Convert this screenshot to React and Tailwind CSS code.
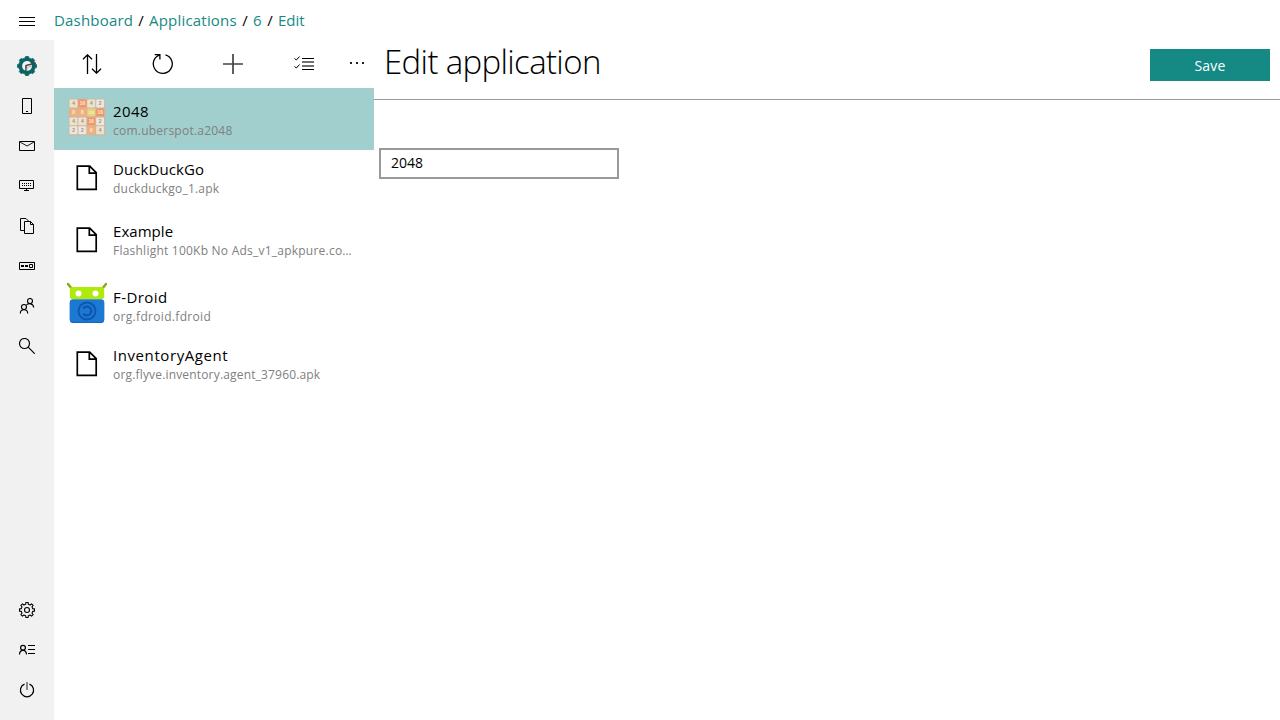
import React from 'react';

const S = ({ size = 16, w = 1, children, className = '' }) => (
  <svg width={size} height={size} viewBox={`0 0 ${size} ${size}`} fill="none" stroke="#000" strokeWidth={w} className={`block shrink-0 ${className}`}>
    {children}
  </svg>
);

const gearPath = (cx, cy, ro, ri, n) => {
  const pts = [];
  for (let i = 0; i < n; i++) {
    const step = (Math.PI * 2) / n;
    const a = i * step - Math.PI / 2;
    [[-0.29, ri], [-0.19, ro], [0.19, ro], [0.29, ri]].forEach(([o, r]) => {
      pts.push(`${(cx + r * Math.cos(a + o * step)).toFixed(2)} ${(cy + r * Math.sin(a + o * step)).toFixed(2)}`);
    });
  }
  return `M${pts.join('L')}Z`;
};

const Logo = () => (
  <svg width="20" height="20" viewBox="0 0 20 20" className="block">
    <path d={gearPath(10, 10, 9.6, 8.3, 8)} fill="#0a6464" stroke="#0a6464" strokeWidth="0.8" strokeLinejoin="round" />
    <circle cx="10" cy="10" r="4.9" fill="#f2f2f2" />
    <path d="M9 15.5V9.6L18.8 7" fill="none" stroke="#444" strokeWidth="1.6" />
    <path d="M10 15v-3.2l4-1.6" fill="none" stroke="#aaa" strokeWidth="0.9" />
  </svg>
);

const Menu = () => <S><path d="M0 3.5h16M0 7.5h16M0 11.5h16" /></S>;
const Phone = () => <S><path d="M3.5.5h9v15h-9zM7 13.5h2" /></S>;
const Mail = () => <S><path d="M.5 3.5h15v9H.5z" /><path d="M1 4l7 4 7-4" strokeWidth="0.9" /></S>;
const Device = () => (
  <S>
    <path d="M.5 2.5h14v8H.5zM7.5 11v2M5 12.5h5" />
    <path d="M3 5.5h10M3 7.5h10" strokeDasharray="1 1" />
  </S>
);
const Files = () => (
  <S>
    <path d="M5 12.5H1.5v-12H7l2.5 2.5" />
    <path d="M5.500 3.500h6l3 3v9h-9zM11.500 3.500v3h3" />
  </S>
);
const Fleet = () => <S><path d="M.5 4.500h15v7H.5zM10.500 6.500h3v3h-3z" /><path d="M2 8h3M6 8h3" strokeWidth="2" /></S>;
const Users = () => (
  <S w={1.15}>
    <circle cx="11" cy="3" r="2.500" />
    <circle cx="5" cy="9" r="2.500" />
    <path d="M1.300 15.500c0-5 7.400-5 7.400 0M7.500 7c1.500-2 7-2 7.200 2.500" />
  </S>
);
const Search = () => <S w={1.15}><circle cx="5.500" cy="5.500" r="5" /><path d="M9.200 9.200l6.500 6.500" /></S>;
const Gear = () => <S w={1.1}><path d={gearPath(8, 8, 7.6, 5.9, 8)} strokeLinejoin="round" /><circle cx="8" cy="8" r="2.500" /></S>;
const Contact = () => (
  <S>
    <circle cx="4" cy="5.700" r="2.400" strokeWidth="1.200" />
    <path d="M.5 12.500c.2-5.600 6.800-5.600 7 0" strokeWidth="1.200" />
    <path d="M9 3.500h7M9 7.500h7M9 11.500h7" />
  </S>
);
const Power = () => <S w={1.2}><path d="M5.500 2.100a6.600 6.600 0 1 0 5 0" /><path d="M8 0v8" stroke="#666" strokeWidth="1.500" /></S>;

const Sort = () => (
  <S size={20} w={1.3}>
    <path d="M5.500 20V.8M1 5.200L5.500.8 10 5.200M14.500 0v19.200M10 14.800l4.500 4.400 4.500-4.400" />
  </S>
);
const Refresh = () => (
  <S size={22} w={1.300}>
    <path d="M13.500 1.800a9.500 9.500 0 1 1-6.300.300M2.700 1.600h5.200v5" />
  </S>
);
const Plus = () => <S size={20} w={2}><path d="M10 0v20M0 10h20" stroke="#444" strokeWidth="1.700" /></S>;
const Checks = () => (
  <S size={20}>
    <path d="M8 4.500h12M8 15.500h12" />
    <path d="M8 8h12M8 12h12" stroke="#444" strokeWidth="1.700" />
    <path d="M.5 4.500L2.300 6 5.600 2.500M.5 12.500L2.300 14l3.300-3.500" />
  </S>
);
const Dots = () => (
  <svg width="14" height="4" viewBox="0 0 14 4" fill="#222" className="block"><path d="M0 1h2v2H0zM6 1h2v2H6zM12 1h2v2h-2z" /></svg>
);
const FileIcon = () => <S size={26} w={1.700}><path d="M3.300 1.200h12.400l6.500 6.500v16.600H3.300zM15.300 1.200v6.900h6.900" /></S>;

const tiles = [
  ['4', '#efe2cb'], ['16', '#f69664'], ['4', '#efe2cb'], ['2', '#eee6dc'],
  ['8', '#f4b07a'], ['8', '#f4b07a'], ['128', '#edd472'], ['16', '#f69664'],
  ['4', '#efe2cb'], ['4', '#efe2cb'], ['16', '#f69664'], ['2', '#eee6dc'],
  ['2', '#eee6dc'], ['2', '#eee6dc'], ['8', '#f4b07a'], ['4', '#efe2cb'],
];
const Icon2048 = () => (
  <svg width="40" height="40" viewBox="0 0 40 40" className="block shrink-0">
    <rect x="1.700" y="1.700" width="36.600" height="36.800" rx="1.500" fill="#c9b8a6" />
    {tiles.map(([n, c], i) => {
      const x = 2.500 + (i % 4) * 8.900;
      const y = 2.500 + Math.floor(i / 4) * 8.950;
      return (
        <g key={i}>
          <rect x={x} y={y} width="7.900" height="7.900" rx="0.600" fill={c} />
          <text x={x + 4} y={y + 5.700} textAnchor="middle" fontSize={n.length > 2 ? 3.500 : 4.800} fontWeight="700" className="font-['Liberation_Sans',sans-serif]" fill={n === '2' || n === '4' ? '#9a8f82' : '#fbeadd'}>{n}</text>
        </g>
      );
    })}
  </svg>
);
const FDroid = () => (
  <svg width="40" height="42" viewBox="0 0 40 42" className="block shrink-0">
    <path d="M1 2l4 5M39 2l-4 5" stroke="#8aa51c" strokeWidth="2.400" strokeLinecap="round" />
    <rect x="2.800" y="5" width="34.400" height="12" rx="2.500" fill="#aeea0c" />
    <circle cx="11.500" cy="11.500" r="3" fill="#fff" />
    <circle cx="28.500" cy="11.500" r="3" fill="#fff" />
    <rect x="2.800" y="17.500" width="34.400" height="23.500" rx="3" fill="#1565c0" />
    <rect x="2.800" y="17.500" width="34.400" height="22.500" rx="3" fill="#1d78d4" />
    <circle cx="20" cy="29" r="8.500" fill="none" stroke="#0d55ad" strokeWidth="1.800" />
    <path d="M16.300 26.500a4.400 4.400 0 1 1 0 5" fill="none" stroke="#0d55ad" strokeWidth="2.200" />
  </svg>
);

const apps = [
  { name: '2048', sub: 'com.uberspot.a2048', icon: <Icon2048 />, nt: 'tracking-[0.45px]', st: 'tracking-[0.23px]' },
  { name: 'DuckDuckGo', sub: 'duckduckgo_1.apk', nt: 'tracking-[0.1px]', st: 'tracking-[0.22px]' },
  { name: 'Example', sub: 'Flashlight 100Kb No Ads_v1_apkpure.co…', nt: 'tracking-[0.05px]', st: 'tracking-[0.23px]' },
  { name: 'F-Droid', sub: 'org.fdroid.fdroid', icon: <FDroid />, nt: 'tracking-[0.42px]', st: 'tracking-[0.32px]' },
  { name: 'InventoryAgent', sub: 'org.flyve.inventory.agent_37960.apk', nt: 'tracking-[0.58px]', st: 'tracking-[0.17px]' },
];

const NavItem = ({ children }) => <a className="flex h-10 items-center justify-center">{children}</a>;

export default function App() {
  return (
    <div className="flex h-[720px] w-[1280px] flex-col overflow-hidden bg-white font-['Open_Sans','Noto_Sans',sans-serif] text-[15px] text-black">
      <header className="flex h-10 shrink-0 items-center">
        <button className="flex w-[54px] justify-center pt-1"><Menu /></button>
        <nav className="flex gap-1 whitespace-pre leading-5 text-[#158984]">
          <a className="w-[79px] tracking-[0.2px]">Dashboard</a>
          <span className="w-2 text-center text-black">/</span>
          <a className="w-[88px] tracking-[0.2px]">Applications</a>
          <span className="w-2 text-center text-black">/</span>
          <a className="w-[9px]">6</a>
          <span className="w-2 text-center text-black">/</span>
          <a>Edit</a>
        </nav>
      </header>
      <div className="flex min-h-0 flex-1">
        <aside className="flex w-[54px] shrink-0 flex-col justify-between bg-[#f1f1f1] pb-[10px] pt-[6px]">
          <div>
            <NavItem><Logo /></NavItem>
            <NavItem><Phone /></NavItem>
            <NavItem><Mail /></NavItem>
            <NavItem><Device /></NavItem>
            <NavItem><Files /></NavItem>
            <NavItem><Fleet /></NavItem>
            <NavItem><Users /></NavItem>
            <NavItem><Search /></NavItem>
          </div>
          <div>
            <NavItem><Gear /></NavItem>
            <NavItem><Contact /></NavItem>
            <NavItem><Power /></NavItem>
          </div>
        </aside>
        <section className="w-80 shrink-0">
          <div className="flex h-12 items-center">
            <span className="flex w-[76px] shrink-0 justify-center"><Sort /></span>
            <span className="flex w-[66px] shrink-0 justify-center"><Refresh /></span>
            <span className="flex w-[74px] shrink-0 justify-center"><Plus /></span>
            <span className="flex w-[68px] shrink-0 justify-center"><Checks /></span>
            <span className="flex w-9 shrink-0 justify-center pb-0.5 pl-0.5"><Dots /></span>
          </div>
          <ul>
            {apps.map((a) => (
              <li key={a.name} className={`flex h-[62px] ${a.icon ? 'pt-[7px]' : 'pt-[3px]'} ${a.name === '2048' ? 'bg-[#a1cfcd]' : ''}`}>
                <div className="ml-[13px] flex h-[44px] w-10 shrink-0 items-center justify-center">{a.icon || <div className="mt-[6px]"><FileIcon /></div>}</div>
                <div className="ml-[6px] w-[246px] pt-[6px]">
                  <div className={`h-[21px] whitespace-nowrap leading-5 ${a.nt}`}>{a.name}</div>
                  <div className={`whitespace-nowrap text-[12px] leading-[18px] text-[#808080] ${a.st}`}>{a.sub}</div>
                </div>
              </li>
            ))}
          </ul>
        </section>
        <main className="min-w-0 flex-1">
          <div className="flex h-[60px] justify-between border-b border-[#999] pl-[10px] pr-[10px]">
            <h1 className="whitespace-nowrap text-[33px] font-light leading-[44px] tracking-[-0.65px]">Edit application</h1>
            <button className="mt-[9px] h-8 w-[120px] bg-[#158984] pt-px text-[14px] leading-[31px] tracking-[0.2px] text-white">Save</button>
          </div>
          <div className="pl-[5px] pt-12">
            <input type="text" defaultValue="2048" className="block h-[31px] w-[240px] border-2 border-[#999] bg-white px-[10px] pb-[2px] text-[14px] outline-none" />
          </div>
        </main>
      </div>
    </div>
  );
}
